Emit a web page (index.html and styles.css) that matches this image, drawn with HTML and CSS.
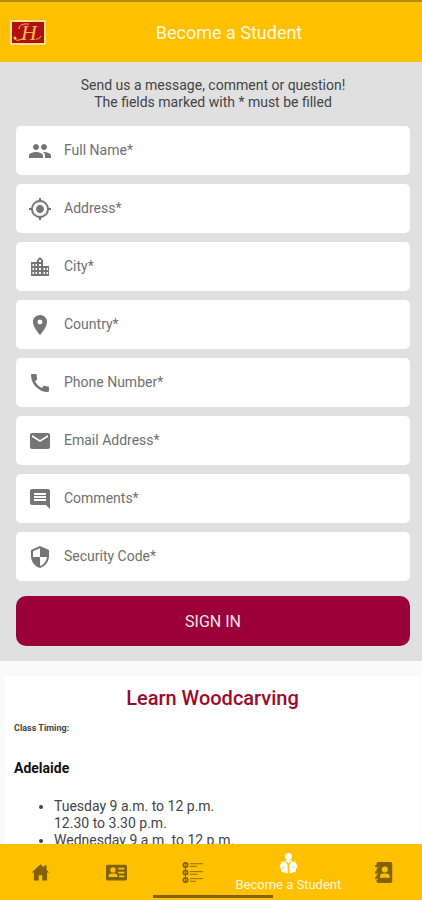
FILE: index.html
```html
<!DOCTYPE html>
<html lang="en">

<head>
  <meta charset="utf-8">
  <meta name="viewport" content="width=device-width, initial-scale=1">
  <title>Become a Student</title>
  <link rel="stylesheet" href="styles.css">
</head>

<body>
  <header class="header">
    <a class="logo" href="#" aria-label="Home">
      <svg viewBox="0 0 36 25">
        <rect width="36" height="25" rx="1" fill="#ffe08a" />
        <rect x="2" y="2" width="32" height="21" fill="#b01010" />
        <text x="11" y="20" class="logo-letter">H</text>
        <path d="M4 17q1 4 5 3 3 0 5-3M9 9q0-4 5-5h5M26 19q3 1 5-3" fill="none" stroke="#f3b55a" />
        <circle cx="5" cy="18" r="1.500" fill="#ffcf50" />
      </svg>
    </a>
    <h1>Become a Student</h1>
  </header>

  <main class="content">
    <form class="form">
      <p class="intro">Send us a message, comment or question!<br>The fields marked with * must be filled</p>

      <div class="fields">
        <label class="field">
          <svg class="icon" viewBox="0 0 24 24"><path d="M16 11c1.660 0 2.990-1.340 2.990-3S17.660 5 16 5s-3 1.340-3 3 1.340 3 3 3zm-8 0c1.660 0 2.990-1.340 2.990-3S9.660 5 8 5 5 6.340 5 8s1.340 3 3 3zm0 2c-2.330 0-7 1.170-7 3.500V19h14v-2.500c0-2.330-4.670-3.500-7-3.500zm8 0c-.29 0-.62.02-.97.05 1.160.84 1.970 1.970 1.970 3.450V19h6v-2.500c0-2.330-4.670-3.500-7-3.500z" /></svg>
          <input type="text" name="name" placeholder="Full Name*" aria-label="Full Name">
        </label>
        <label class="field">
          <svg class="icon" viewBox="0 0 24 24"><path d="M12 8c-2.210 0-4 1.790-4 4s1.790 4 4 4 4-1.790 4-4-1.790-4-4-4zm8.940 3A8.994 8.994 0 0 0 13 3.060V1h-2v2.060A8.994 8.994 0 0 0 3.060 11H1v2h2.060A8.994 8.994 0 0 0 11 20.940V23h2v-2.060A8.994 8.994 0 0 0 20.940 13H23v-2h-2.060zM12 19c-3.870 0-7-3.130-7-7s3.130-7 7-7 7 3.130 7 7-3.130 7-7 7z" /></svg>
          <input type="text" name="address" placeholder="Address*" aria-label="Address">
        </label>
        <label class="field">
          <svg class="icon" viewBox="0 0 24 24"><path fill-rule="evenodd" d="M15 11V5l-3-3-3 3v2H3v14h18V11h-6zM4.500 9h1.500v2H4.500zM7.500 9H9v2H7.500zM4.500 13h1.500v2H4.500zM7.500 13H9v2H7.500zM4.500 17h1.500v2H4.500zM7.500 17H9v2H7.500zM11 5h2v2h-2zM11 9h2v2h-2zM11 13h2v2h-2zM11 17h2v2h-2zM15.500 13H17v2h-1.500zM18.500 13H20v2h-1.500zM15.500 17H17v2h-1.500zM18.500 17H20v2h-1.500z" /></svg>
          <input type="text" name="city" placeholder="City*" aria-label="City">
        </label>
        <label class="field">
          <svg class="icon" viewBox="0 0 24 24"><path d="M12 2C8.130 2 5 5.130 5 9c0 5.250 7 13 7 13s7-7.750 7-13c0-3.870-3.130-7-7-7zm0 9.500a2.500 2.500 0 0 1 0-5 2.500 2.500 0 0 1 0 5z" /></svg>
          <input type="text" name="country" placeholder="Country*" aria-label="Country">
        </label>
        <label class="field">
          <svg class="icon" viewBox="0 0 24 24"><path d="M20.010 15.380c-1.230 0-2.420-.2-3.530-.56-.35-.12-.74-.03-1.010.24l-1.570 1.970c-2.830-1.350-5.480-3.900-6.890-6.830l1.950-1.660c.27-.28.35-.67.24-1.020-.37-1.110-.56-2.300-.56-3.530 0-.54-.45-.99-.99-.99H4.190C3.650 3 3 3.240 3 3.990 3 13.280 10.730 21 20.010 21c.71 0 .99-.63.99-1.180v-3.450c0-.54-.45-.99-.99-.99z" /></svg>
          <input type="tel" name="phone" placeholder="Phone Number*" aria-label="Phone Number">
        </label>
        <label class="field">
          <svg class="icon" viewBox="0 0 24 24"><path d="M20 4H4c-1.100 0-2 .9-2 2v12c0 1.100.9 2 2 2h16c1.100 0 2-.9 2-2V6c0-1.100-.9-2-2-2zm0 4l-8 5-8-5V6l8 5 8-5v2z" /></svg>
          <input type="email" name="email" placeholder="Email Address*" aria-label="Email Address">
        </label>
        <label class="field">
          <svg class="icon" viewBox="0 0 24 24"><path d="M21.990 4c0-1.100-.89-2-1.990-2H4c-1.100 0-2 .9-2 2v12c0 1.100.9 2 2 2h14l4 4-.01-18zM18 14H6v-2h12v2zm0-3H6V9h12v2zm0-3H6V6h12v2z" /></svg>
          <input type="text" name="comments" placeholder="Comments*" aria-label="Comments">
        </label>
        <label class="field">
          <svg class="icon" viewBox="0 0 24 24"><path d="M12 1L3 5v6c0 5.550 3.840 10.740 9 12 5.160-1.260 9-6.450 9-12V5l-9-4zm0 10.990h7c-.53 4.120-3.280 7.790-7 8.940V12H5V6.300l7-3.110v8.800z" /></svg>
          <input type="text" name="code" placeholder="Security Code*" aria-label="Security Code">
        </label>
      </div>

      <button class="submit" type="button">SIGN IN</button>
    </form>

    <section class="classes">
      <h2>Learn Woodcarving</h2>
      <h6>Class Timing:</h6>
      <h4>Adelaide</h4>
      <ul>
        <li>Tuesday 9 a.m. to 12 p.m.<br>12.30 to 3.30 p.m.</li>
        <li>Wednesday 9 a.m. to 12 p.m.</li>
      </ul>
    </section>
  </main>

  <nav class="tabs">
    <a class="tab" href="#" aria-label="Home">
      <svg viewBox="0 0 24 24"><path d="M12 2.500L2 12h2.500v9h5.500v-6h4v6h5.500v-9H22l-3-3V4h-3v2.300z" /></svg>
    </a>
    <a class="tab" href="#" aria-label="About">
      <svg viewBox="0 0 24 24"><path fill-rule="evenodd" d="M2 3h20q2 0 2 2v14q0 2-2 2H2q-2 0-2-2V5q0-2 2-2zM8 6a3 3 0 1 0 0 6 3 3 0 0 0 0-6zM3 17h10v-1q0-3-3-3H6q-3 0-3 3zM14 6.500h7v2h-7zM14 11h7v2h-7zM15 15.500h6v2h-6z" /></svg>
    </a>
    <a class="tab" href="#" aria-label="Classes">
      <svg viewBox="0 0 24 24"><g fill="none" stroke="#82620a"><path d="M9 2h15M9 5h8M9 11h15M9 14h9M9 19h15M9 22h7" /><g stroke-width="2"><circle cx="4" cy="3.500" r="2.500" /><circle cx="4" cy="12" r="2.500" /><circle cx="4" cy="20.500" r="2.500" /></g><path d="M4 0v24" /></g></svg>
    </a>
    <a class="tab active" href="#" aria-current="page">
      <svg viewBox="0 0 24 24"><circle cx="12" cy="4" r="4" /><path d="M11 13v10.500L3.500 21v-3.500Q1.500 17 2 15l2-5q4-1 7 3zM13 13v10.500l7.500-2.500v-3.500Q22.500 17 22 15l-2-5q-4-1-7 3z" /><path d="M7 9q5-2 10 0-3 1-5 3-2-2-5-3z" /><path d="M5 17l2.500-1.500M19 17l-2.500-1.500" stroke="#ffc000" fill="none" /></svg>
      <span>Become a Student</span>
    </a>
    <a class="tab" href="#" aria-label="Contact">
      <svg viewBox="0 0 24 24"><path fill-rule="evenodd" d="M6 0h14q2 0 2 2v20q0 2-2 2H6q-2 0-2-2v-2H2.500v-2.500H4V13H2.500v-2.500H4V6H2.500V3.500H4V2q0-2 2-2zM13.500 5a3.500 3.500 0 1 0 0 7 3.500 3.500 0 0 0 0-7zM8 18h11v-1.500q0-3.500-3.500-3.500h-4Q8 13 8 16.500z" /><path d="M2 8l4-2M2 15l4-2M2 21l4-2" stroke="#ffc000" fill="none" /></svg>
    </a>
    <div class="home-bar"></div>
  </nav>
</body>

</html>
```

FILE: styles.css
```css
* {
  box-sizing: border-box;
}

body {
  display: flex;
  flex-direction: column;
  height: 100vh;
  margin: 0;
  overflow: hidden;
  background: #fafafa;
  color: #444;
  font-family: Roboto, sans-serif;
  font-size: 14px;
}

/* Top bar */
.header {
  display: grid;
  grid-template-columns: 36px 1fr 0;
  align-items: center;
  flex: none;
  height: 62px;
  padding: 0 10px;
  background: #ffc000;
  border-top: 2px solid #b58a1a;
}

.logo svg {
  display: block;
  width: 36px;
  height: 25px;
}

.logo-letter {
  fill: #f3b55a;
  font-family: "Liberation Serif", serif;
  font-size: 22px;
  font-style: italic;
}

.header h1 {
  margin: 0;
  color: #fff8e0;
  font-size: 18px;
  font-weight: 400;
  text-align: center;
}

.content {
  flex: 1;
  min-height: 0;
  overflow: hidden;
}

/* Form */
.form {
  padding: 15px 12px 15px 16px;
  background: #e0e0e0;
}

.intro {
  margin: 0 0 15px;
  line-height: 17px;
  text-align: center;
}

.fields {
  display: grid;
  gap: 9px;
}

.field {
  display: flex;
  align-items: center;
  gap: 12px;
  height: 49px;
  padding: 0 12px;
  background: #fff;
  border-radius: 5px;
}

.icon {
  flex: none;
  width: 24px;
  height: 24px;
  fill: #757575;
}

.field input {
  flex: 1;
  min-width: 0;
  padding: 0 0 2px;
  border: 0;
  outline: 0;
  background: none;
  color: #333;
  font: inherit;
}

.field input::placeholder {
  color: #707070;
  opacity: 1;
}

.submit {
  width: 100%;
  height: 50px;
  margin-top: 15px;
  border: 0;
  border-radius: 10px;
  background: #9c0038;
  color: #f4e4ea;
  font: 400 16px Roboto, sans-serif;
}

/* Class list */
.classes {
  margin: 15px 2px 0 5px;
  padding: 10px 9px;
  background: #fff;
}

.classes h2 {
  margin: 0;
  color: #9c0a2c;
  font-size: 20px;
  font-weight: 500;
  line-height: 24px;
  text-align: center;
}

.classes h6 {
  margin: 12px 0 0;
  font-size: 9px;
  font-weight: 700;
  line-height: 12px;
}

.classes h4 {
  margin: 24px 0 0;
  color: #111;
  font-size: 14px;
  font-weight: 700;
  line-height: 20px;
}

.classes ul {
  margin: 20px 0 0;
  padding-left: 40px;
  line-height: 17px;
}

/* Bottom tabs */
.tabs {
  position: relative;
  display: flex;
  flex: none;
  height: 56px;
  padding-left: 2px;
  background: #ffc000;
}

.tab {
  display: flex;
  flex: 2;
  flex-direction: column;
  align-items: center;
  justify-content: center;
  text-decoration: none;
}

.tab svg {
  width: 21px;
  height: 21px;
  fill: #82620a;
}

.tab.active {
  flex: 3;
  gap: 3px;
  padding-top: 2px;
  color: #fff8e0;
  font-size: 13px;
  line-height: 16px;
  white-space: nowrap;
}

.tab.active svg {
  fill: #fff;
}

.home-bar {
  position: absolute;
  bottom: 2px;
  left: 50%;
  width: 120px;
  height: 3px;
  margin-left: -58px;
  background: #85620a;
}
```
